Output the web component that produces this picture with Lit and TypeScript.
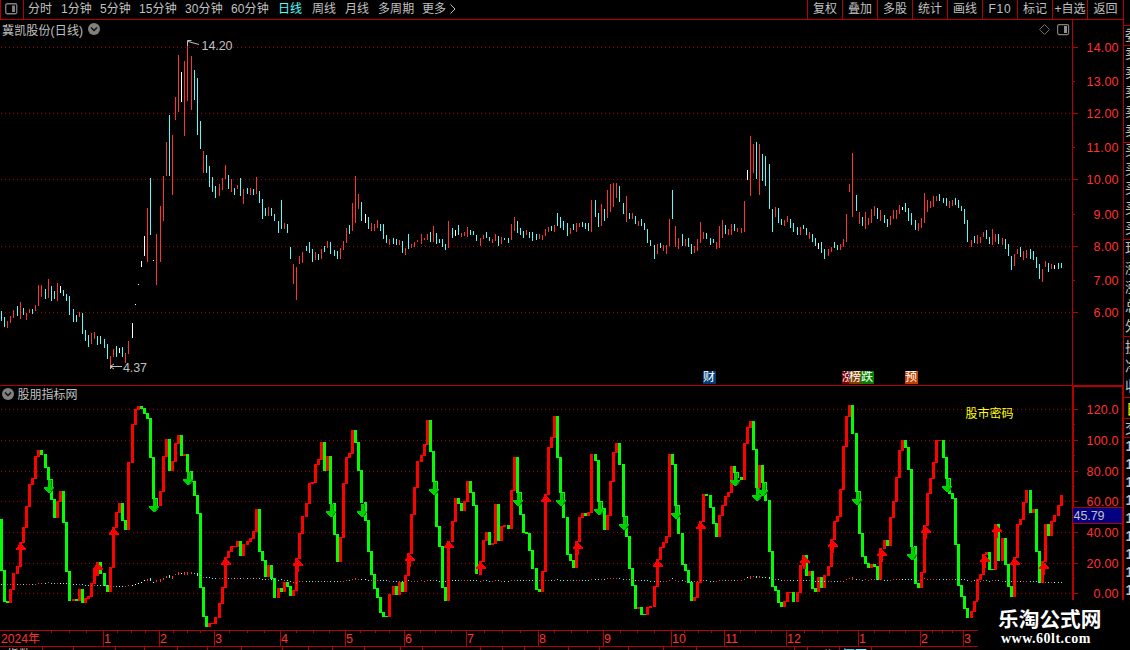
import { LitElement, html, svg, css } from 'lit';
import { customElement } from 'lit/decorators.js';

// r = up, c = down, w = flat; each entry is colour, high-low in chart rows
const CANDLES = `
c311-321 c317-327 r321-328 r316-323 r310-318
c306-316 r302-319 c308-315 r313-320 r309-313 c309-314 r305-311 r285-306 r285-297
c289-299 r279-298 c286-301 c291-299 r283-301 w286-293 c290-296 c294-301 c296-315
c309-322 c315-322 r312-317 c313-334 c330-341 c335-347 r333-344 r332-339 c336-345 c336-344
c339-348 c344-359 r356-366 r349-357 c346-357 w348-353 c347-357 r353-363 r341-354
w323-338 w304-305 w284-285 w261-267 w236-256 r208-262 c178-235 w260-261 r234-285
r206-262 r176-221 r142-176 c115-176 r135-195 r97-120 r55-112 w72-102 r61-136 r43-101
r56-110 c70-100 c78-135 c121-149 r151-173 c155-173 c166-187 c177-192 c186-198
r184-196 r178-190 r165-179 c175-189 r179-192 c188-195 r185-189 c178-196 r189-204
c188-194 r188-195 c189-195 r177-194 c191-203 c199-219 c208-216 r207-216 c208-216 c214-221
c221-233 c200-229 r223-229 c224-233 c247-259 r264-284 r267-300 r256-264 r252-263
c246-251 c242-253 c249-262 r252-260 c254-260 r249-259 c246-252 r241-248 c242-254
c250-256 c251-259 r248-259 r241-250 r228-243 c225-234 r203-231 r176-223 r194-209 c202-221
w214-223 c217-229 r223-231 r224-231 r220-228 c224-231 c224-239 c235-243 r239-245
c238-244 c239-245 r240-245 c241-253 r248-255 c234-249 r244-248 r242-247 r240-242
r234-244 r238-240 r234-240 c232-242 r226-242 c233-244 c239-243 c239-247 c244-250 r221-248
c228-238 w230-236 c225-235 r233-237 r232-236 r227-237 c230-235 c231-235 c235-241
r238-246 r235-239 c232-238 c237-241 r239-243 r234-241 c236-246 r237-244 c238-240
c238-243 r224-240 r217-231 c221-233 c228-235 c231-238 r230-235 c232-238 c232-241
c234-240 r234-239 r235-240 r229-236 r227-232 c226-231 r225-232 c213-226 c217-228 c221-230
c223-236 r228-234 c224-230 r223-232 r223-227 c222-227 c223-229 c223-231 r200-232
c200-217 c213-227 r204-226 c209-221 r190-218 r184-212 r183-207 r183-198 c186-202
c203-214 r196-222 c213-219 r213-219 c216-224 r221-226 c219-226 c223-230 c229-243 c240-246
c245-259 r244-254 c243-248 r245-251 r245-254 r219-246 c190-219 r226-247 r238-249
c234-246 r239-246 c238-247 c244-254 r246-253 r239-251 r222-243 r232-239 c233-239
c238-245 c239-243 r242-249 r226-248 r220-238 c225-234 r229-235 r224-235 c224-231 r228-232
r228-233 r201-232 w170-180 r136-196 r144-173 c142-179 r144-195 c154-181 c156-186
c164-209 c209-232 r207-217 c208-223 c219-225 r220-226 r216-222 c219-228 c223-232
c227-235 r227-235 c225-229 c228-235 r232-239 c234-242 c238-246 w243-249 c242-253 c249-259
r249-256 r247-252 c242-248 c245-250 r244-250 r239-247 r214-242 r184-192 r153-217
c195-211 r212-224 c217-226 r212-229 r218-225 r209-223 r206-216 c208-219 r210-221
c215-223 c219-227 r216-225 r210-219 r210-219 r205-214 w207-210 c203-212 c208-221 c213-225
c220-230 r223-231 r218-228 r193-223 r200-212 r201-208 r196-207 r196-201 c194-201
c198-203 c198-206 r201-208 r200-206 c198-205 c200-208 c206-211 c209-224 c220-242
r240-247 c236-243 r235-244 r237-243 r232-237 c230-239 c237-244 r229-245 r234-242 c234-244
r238-245 c239-249 c244-256 c256-270 r254-266 r249-254 c247-257 r251-260 r250-258
c249-259 c251-260 c257-268 c264-279 r269-282 r261-267 c263-272 r264-269 w265-269
c263-269 c263-268`
  .trim()
  .split(/\s+/)
  .map((s) => {
    const [top, bottom] = s.slice(1).split('-').map(Number);
    return { kind: s[0], top, bottom };
  });

// oscillator level per day
const LEVELS = [
  570, 601, 602, 589, 573, 566, 542, 527, 506, 484, 478, 456, 450, 454, 467, 479, 499, 517, 501, 491,
  522, 571, 600, 599, 600, 589, 602, 598, 596, 583, 570, 562, 573, 585, 591, 567, 527, 512, 503, 520,
  529, 462, 424, 409, 406, 408, 413, 418, 457, 498, 505, 491, 456, 439, 470, 461, 443, 435, 455, 454,
  471, 481, 495, 513, 587, 616, 626, 623, 623, 617, 603, 587, 557, 551, 546, 546, 541, 555, 544, 541,
  538, 531, 509, 551, 560, 576, 565, 578, 597, 588, 591, 582, 586, 595, 590, 558, 533, 516, 503, 483,
  482, 464, 459, 442, 470, 456, 503, 534, 561, 537, 483, 457, 453, 430, 442, 470, 502, 520, 551, 574,
  588, 597, 612, 616, 616, 594, 586, 594, 582, 591, 575, 553, 514, 487, 461, 455, 444, 420, 451, 481,
  526, 546, 587, 600, 541, 521, 498, 503, 510, 501, 481, 492, 505, 573, 561, 540, 532, 544, 543, 504,
  540, 526, 525, 528, 490, 457, 492, 514, 532, 533, 550, 568, 589, 591, 571, 494, 447, 437, 416, 457,
  492, 517, 554, 560, 567, 541, 517, 513, 515, 512, 454, 460, 501, 508, 529, 515, 481, 452, 443, 464,
  516, 536, 568, 585, 608, 607, 614, 614, 607, 606, 586, 559, 547, 542, 536, 454, 464, 505, 533, 564,
  570, 582, 600, 597, 582, 521, 494, 495, 507, 523, 536, 515, 505, 496, 492, 466, 472, 477, 479, 443,
  427, 421, 449, 487, 465, 482, 500, 551, 586, 590, 602, 606, 601, 592, 592, 601, 592, 565, 555, 575,
  571, 588, 591, 577, 587, 575, 566, 539, 521, 516, 489, 446, 416, 405, 433, 491, 533, 556, 563, 567,
  564, 566, 579, 548, 540, 545, 517, 501, 477, 450, 440, 447, 469, 546, 583, 587, 572, 525, 493, 478,
  462, 440, 440, 457, 478, 493, 498, 544, 585, 596, 608, 617, 611, 601, 579, 574, 554, 552, 569, 569,
  524, 560, 538, 564, 586, 596, 557, 524, 519, 502, 490, 512, 509, 551, 582, 561, 524, 535, 521, 515,
  505, 495,
];

const BUYS = [
  [20, 543], [97, 563], [113, 528], [225, 558], [297, 559], [409, 554], [448, 541], [480, 562],
  [545, 495], [577, 542], [657, 560], [700, 522], [804, 556], [832, 540], [881, 549], [925, 526],
  [984, 555], [996, 525], [1014, 558], [1043, 562],
];

const SELLS = [
  [49, 492], [154, 511], [188, 484], [331, 516], [362, 516], [434, 494], [518, 505], [561, 505],
  [599, 514], [624, 529], [676, 518], [735, 485], [757, 500], [763, 495], [857, 504], [912, 559], [947, 491],
];

const PRICE_MARKS: [string, number][] = [
  ['14.00', 47], ['13.00', 81], ['12.00', 113], ['11.00', 147], ['10.00', 179],
  ['9.00', 214], ['8.00', 246], ['7.00', 280], ['6.00', 312],
];

const LEVEL_MARKS: [string, number][] = [
  ['120.0', 409], ['100.0', 440], ['80.00', 471], ['60.00', 501], ['40.00', 532], ['20.00', 563], ['0.00', 593],
];

const MONTHS: [string, number][] = [
  ['1', 103], ['2', 159], ['3', 214], ['4', 280], ['5', 345], ['6', 404], ['7', 466], ['8', 538],
  ['9', 603], ['10', 671], ['11', 724], ['12', 786], ['1', 858], ['2', 920], ['3', 963],
];

const WEEK_TICKS = [
  51, 69, 86, 117, 131, 145, 173, 187, 200, 229, 247, 264, 296, 313, 329, 360, 375, 389, 420, 435, 451,
  484, 502, 520, 554, 571, 587, 620, 637, 654, 684, 698, 711, 740, 755, 771, 804, 822, 837, 874, 889, 905,
  932, 942, 952,
];

const FOOT_TICKS = [
  42, 73, 115, 144, 177, 207, 241, 282, 308, 332, 364, 400, 422, 480, 502, 524, 568, 599, 628, 663, 696,
  794, 807, 839, 871,
];

const INK: Record<string, string> = { r: '#ff3232', c: '#54fcfc', w: '#ffffff' };

const dayX = (i: number) => Math.floor(1.546 + 3.1073 * i);

const gridLine = (y: number) => svg`<line class="grid" x1="1" x2="1071" y1=${y + 0.5} y2=${y + 0.5}></line>`;

const chevron = html`
  <svg class="chevron" width="12" height="12" viewBox="0 0 12 12">
    <circle cx="6" cy="6" r="6" fill="#808080"></circle>
    <path d="M3 4.5 6 7.5 9 4.5" fill="none" stroke="#101010" stroke-width="1.5"></path>
  </svg>
`;

const base = css`
  :host {
    display: block;
    font-family: 'Liberation Sans', 'Noto Sans CJK SC', sans-serif;
    font-size: 12px;
    color: #c0c0c0;
  }
  svg {
    display: block;
  }
  .grid {
    stroke: #a80000;
    stroke-dasharray: 1 3;
    shape-rendering: crispEdges;
  }
  .crisp {
    shape-rendering: crispEdges;
  }
  .scale {
    font-size: 12.5px;
    fill: #ff3232;
  }
`;

@customElement('chart-toolbar')
export class ChartToolbar extends LitElement {
  static styles = [
    base,
    css`
      :host {
        display: flex;
        height: 19px;
        line-height: 19px;
        border-bottom: 1px solid #b40000;
        white-space: nowrap;
      }
      .toggle {
        width: 24px;
        box-sizing: border-box;
        border-left: 1px solid #b40000;
        border-right: 1px solid #b40000;
        padding: 3px 0 0 4px;
        margin-right: 4px;
      }
      .tab.active {
        color: #54fcfc;
      }
      .tab {
        letter-spacing: 0.1px;
      }
      .tools {
        display: flex;
        margin-left: auto;
      }
      .tool {
        width: 35px;
        box-sizing: border-box;
        border-left: 1px solid #b40000;
        text-align: center;
      }
      .tool:last-child {
        width: 36px;
      }
      .num {
        letter-spacing: 0.8px;
      }
    `,
  ];

  tabs: [string, number][] = [
    ['分时', 33], ['1分钟', 39], ['5分钟', 39], ['15分钟', 46], ['30分钟', 46], ['60分钟', 47],
    ['日线', 34], ['周线', 33], ['月线', 33], ['多周期', 44], ['更多', 27],
  ];

  tools = ['复权', '叠加', '多股', '统计', '画线', 'F10', '标记', '+自选', '返回'];

  render() {
    return html`
      <div class="toggle">
        <svg width="13" height="12" viewBox="0 0 13 12">
          <rect x="0.75" y="0.75" width="11" height="10" rx="1.5" fill="none" stroke="#808080" stroke-width="1.3"></rect>
          <rect x="7" y="2.5" width="3" height="6.5" fill="#808080"></rect>
        </svg>
      </div>
      ${this.tabs.map(
        ([label, w]) => html`<div class="tab ${label === '日线' ? 'active' : ''}" style="width:${w}px">${label}</div>`
      )}
      <svg width="8" height="18" viewBox="0 0 8 18">
        <path d="M1.5 4.5 6 9 1.5 13.5" fill="none" stroke="#c0c0c0"></path>
      </svg>
      <div class="tools">
        ${this.tools.map((t) => html`<div class="tool ${t === 'F10' ? 'num' : ''}">${t}</div>`)}
      </div>
    `;
  }
}

@customElement('price-pane')
export class PricePane extends LitElement {
  static styles = [
    base,
    css`
      :host {
        display: flex;
        position: relative;
        height: 365px;
      }
      .title {
        position: absolute;
        left: 2px;
        top: 0;
        display: flex;
        align-items: center;
        gap: 5px;
        height: 18px;
        letter-spacing: 0.15px;
      }
      .corner {
        position: absolute;
        left: 1038px;
        top: 3px;
      }
      .mark {
        font-size: 12.5px;
        fill: #c0c0c0;
      }
      .badge {
        position: absolute;
        top: 351px;
        height: 13px;
        line-height: 13px;
        overflow: hidden;
        color: #fff;
        white-space: nowrap;
      }
      .fin { left: 703px; width: 13px; background: #003c78; }
      .rise { left: 842px; width: 7px; background: #800000; }
      .rank { left: 849px; width: 12px; background: #804000; }
      .fall { left: 861px; width: 13px; background: #008000; }
      .fore { left: 905px; width: 13px; background: #c04000; }
    `,
  ];

  render() {
    return html`
      <svg width="1072" height="365" viewBox="0 20 1072 365">
        ${PRICE_MARKS.filter((_, i) => i % 2 === 0).map(([, y]) => gridLine(y))}
        <g class="crisp">
          ${CANDLES.map(
            (d, i) => svg`<rect x=${dayX(i)} y=${d.top} width="1" height=${d.bottom - d.top} fill=${INK[d.kind]}></rect>`
          )}
        </g>
        <path d="M199 44.5 188 41.5M187.5 46V40.5H191.5M110.5 369V366.5H122M110 366.5 114 364M110 366.5 114 369"
          fill="none" stroke="#c0c0c0"></path>
        <text class="mark" x="201.5" y="50" textLength="31">14.20</text>
        <text class="mark" x="123" y="372" textLength="24">4.37</text>
      </svg>
      <svg width="51" height="365" viewBox="1072 20 51 365">
        <g class="crisp" fill="#b40000">
          <rect x="1072" y="20" width="1" height="365"></rect>
          ${PRICE_MARKS.map(([, y], i) => svg`<rect x="1072" y=${y} width=${i % 2 ? 3 : 6} height="1"></rect>`)}
        </g>
        ${PRICE_MARKS.map(
          ([t, y]) =>
            svg`<text class="scale" x="1118.5" y=${y + 5} text-anchor="end" textLength=${t.length > 4 ? 32 : 25}>${t}</text>`
        )}
      </svg>
      <div class="title"><span>冀凯股份(日线)</span>${chevron}</div>
      <svg class="corner" width="32" height="14" viewBox="0 0 32 14">
        <path d="M6.5 1.5 11.5 6.5 6.5 11.5 1.5 6.5Z" fill="none" stroke="#707070"></path>
        <rect x="19.6" y="1.6" width="11" height="10" rx="1.5" fill="none" stroke="#808080" stroke-width="1.2"></rect>
        <rect x="26" y="3" width="3" height="7" fill="#909090"></rect>
      </svg>
      <span class="badge fin">财</span>
      <span class="badge rise">涨</span>
      <span class="badge rank">榜</span>
      <span class="badge fall">跌</span>
      <span class="badge fore">预</span>
    `;
  }
}

@customElement('level-pane')
export class LevelPane extends LitElement {
  static styles = [
    base,
    css`
      :host {
        display: flex;
        position: relative;
        height: 245px;
      }
      .title {
        position: absolute;
        left: 2px;
        top: 0;
        display: flex;
        align-items: center;
        gap: 3.5px;
        height: 17px;
      }
      .note {
        font-size: 12px;
        fill: #ffff00;
      }
      .value {
        font-size: 12.5px;
        fill: #c0c0c0;
      }
    `,
  ];

  bars() {
    let prev = 519;
    let color = '#00ff00';
    return LEVELS.map((v, i) => {
      if (v !== prev) color = v < prev ? '#ff0000' : '#00ff00';
      const bar = svg`<rect x=${dayX(i) - 1} y=${Math.min(v, prev)} width="3" height=${Math.abs(v - prev) + 1} fill=${color}></rect>`;
      prev = v;
      return bar;
    });
  }

  // the day's price range again, on the oscillator's scale
  dots() {
    const toRow = (y: number) => 593.7 - (8 - (y - 246) / 33.15) * 1.532;
    return CANDLES.map((d, i) => {
      const top = Math.floor(toRow(d.top));
      const h = Math.max(1, Math.round(toRow(d.bottom) - toRow(d.top)));
      return svg`<rect x=${dayX(i)} y=${top} width="1" height=${h} fill=${INK[d.kind]}></rect>`;
    });
  }

  render() {
    return html`
      <svg width="1072" height="245" viewBox="0 385 1072 245">
        <rect class="crisp" x="0" y="385" width="1072" height="1" fill="#b40000"></rect>
        ${LEVEL_MARKS.map(([, y]) => gridLine(y))}
        <g class="crisp">${this.bars()}${this.dots()}</g>
        <g class="crisp">
          ${BUYS.map(
            ([x, y]) => svg`
              <path d="M${x} ${y}h1l5 6v1h-10v-1l4 -6z" fill="#ff0000"></path>
              <rect x=${x - 1} y=${y + 6} width="3" height="7" fill="#ff0000"></rect>`
          )}
          ${SELLS.map(
            ([x, y]) => svg`
              <rect x=${x - 1} y=${y - 12} width="3" height="8" fill="#00d200"></rect>
              <rect x=${x + 2} y=${y - 12} width="1" height="7" fill="#008c00"></rect>
              <path d="M${x - 5} ${y - 5}h10v1l-4 5h-2l-4 -5z" fill="#00d200"></path>
              <path d="M${x + 5} ${y - 4}l-4 5" fill="none" stroke="#008c00"></path>`
          )}
        </g>
        <text class="note" x="965.5" y="417.5">股市密码</text>
      </svg>
      <svg width="51" height="245" viewBox="1072 385 51 245">
        <g class="crisp" fill="#b40000">
          <rect x="1072" y="385" width="51" height="2"></rect>
          <rect x="1072" y="385" width="2" height="245"></rect>
          <rect x="1122" y="385" width="1" height="245"></rect>
          ${LEVEL_MARKS.map(
            ([, y]) => svg`<rect x="1074" y=${y} width="4" height="1"></rect><rect x="1074" y=${y + 15} width="1" height="1"></rect>`
          )}
          <rect x="1073" y="507" width="50" height="17"></rect>
          <rect x="1073" y="508" width="49" height="15" fill="#000080"></rect>
        </g>
        ${LEVEL_MARKS.map(
          ([t, y]) =>
            svg`<text class="scale" x="1118.5" y=${y + 5} text-anchor="end" textLength=${t.length > 4 ? 32 : 25}>${t}</text>`
        )}
        <text class="value" x="1073.5" y="519.5" textLength="31">45.79</text>
      </svg>
      <div class="title">${chevron}<span>股朋指标网</span></div>
    `;
  }
}

@customElement('time-axis')
export class TimeAxis extends LitElement {
  static styles = [
    base,
    css`
      .year {
        font-size: 12px;
        letter-spacing: 0.1px;
      }
      .foot {
        font-size: 12px;
        fill: #c0c0c0;
      }
      .foot.hot {
        fill: #54fcfc;
      }
    `,
  ];

  render() {
    return html`
      <svg width="1123" height="20" viewBox="0 630 1123 20">
        <g class="crisp" fill="#b40000">
          <rect x="0" y="630" width="1123" height="1"></rect>
          <rect x="0" y="646" width="1123" height="1"></rect>
          ${MONTHS.map(([, x]) => svg`<rect x=${x} y="631" width="1" height="15"></rect>`)}
          ${WEEK_TICKS.map((x) => svg`<rect x=${x} y="631" width="1" height="2"></rect>`)}
          ${FOOT_TICKS.map((x) => svg`<rect x=${x} y="647" width="1" height="3"></rect>`)}
        </g>
        <text class="scale year" x="1" y="643">2024年</text>
        ${MONTHS.map(([t, x]) => svg`<text class="scale" x=${x + 1} y="643">${t}</text>`)}
        <text class="foot" x="7" y="658.5">指数</text>
        <text class="foot" x="46" y="658.5">1</text>
        <text class="foot" x="822" y="658.5">八</text>
        <text class="foot hot" x="843" y="658.5">深百</text>
      </svg>
    `;
  }
}

// visible edge of the quote panel that sits right of the chart
@customElement('quote-edge')
export class QuoteEdge extends LitElement {
  static styles = [
    base,
    css`
      :host {
        width: 6px;
        height: 650px;
        overflow: hidden;
      }
      .hot {
        fill: #ffff00;
      }
      .big {
        font-size: 14px;
      }
      .digit {
        font-weight: bold;
        font-size: 14px;
      }
    `,
  ];

  rows: [string, number][] = [
    ['委', 40], ['卖', 58], ['卖', 77], ['卖', 96], ['卖', 116], ['卖', 135], ['买', 155], ['买', 174],
    ['买', 193], ['买', 213], ['买', 233], ['现', 253], ['涨', 273], ['涨', 292], ['总', 311], ['外', 331],
    ['换', 352], ['净', 371], ['收', 391], ['交', 433],
  ];

  render() {
    return html`
      <svg width="6" height="650" viewBox="1124 0 6 650" fill="#c0c0c0">
        <g class="crisp" fill="#b40000">
          ${[25, 45, 142, 239, 336, 397, 418, 437].map((y) => svg`<rect x="1124" y=${y} width="6" height="1"></rect>`)}
        </g>
        ${this.rows.map(([t, y]) => svg`<text class="big" x="1125" y=${y}>${t}</text>`)}
        <text class="big hot" x="1126" y="414">日</text>
        ${Array.from({ length: 9 }, (_, i) => svg`<text class="digit" x="1125.5" y=${451 + i * 18}>1</text>`)}
      </svg>
    `;
  }
}

@customElement('app-root')
export class AppRoot extends LitElement {
  static styles = [
    base,
    css`
      :host {
        display: flex;
        position: relative;
        width: 1130px;
        height: 650px;
        overflow: hidden;
        background: #000;
      }
      .main {
        width: 1123px;
        border-right: 1px solid #b40000;
      }
      .brand {
        position: absolute;
        right: 0;
        bottom: 0;
        width: 152px;
        height: 50px;
        box-sizing: border-box;
        padding: 6px 0 0 20px;
        background: #000;
        color: #fff;
        white-space: nowrap;
      }
      .name {
        font: bold 20.7px/25px 'Noto Sans CJK SC', sans-serif;
      }
      .site {
        padding-left: 3px;
        font: bold 14px/16px 'Liberation Serif', serif;
        letter-spacing: 0.5px;
      }
    `,
  ];

  render() {
    return html`
      <div class="main">
        <chart-toolbar></chart-toolbar>
        <price-pane></price-pane>
        <level-pane></level-pane>
        <time-axis></time-axis>
      </div>
      <quote-edge></quote-edge>
      <div class="brand">
        <div class="name">乐淘公式网</div>
        <div class="site">www.60lt.com</div>
      </div>
    `;
  }
}
